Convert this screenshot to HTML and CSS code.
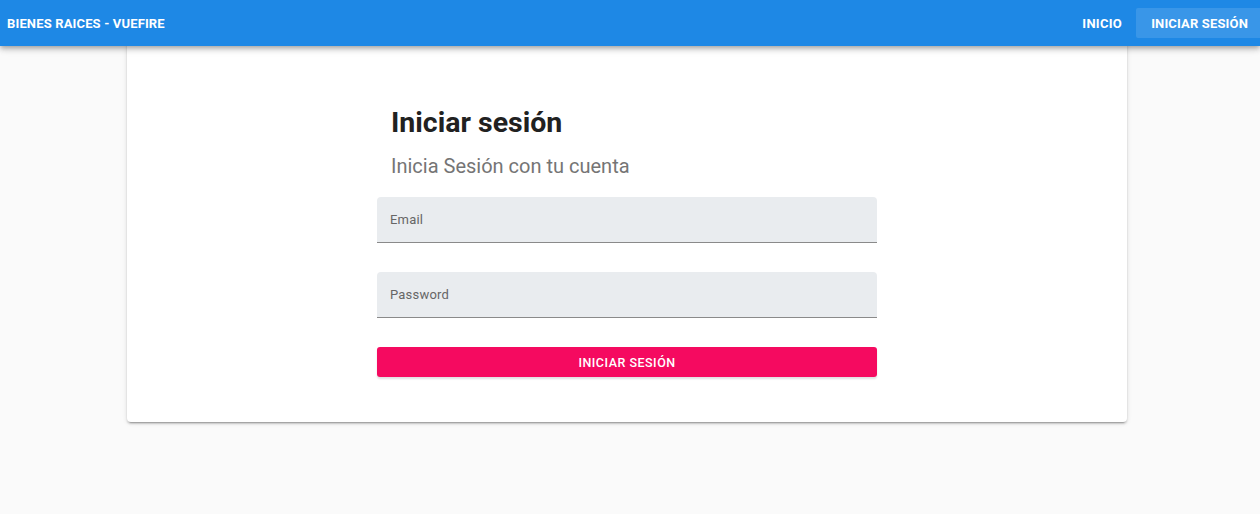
FILE: index.html
```html
<!DOCTYPE html>
<html lang="es">
<head>
<meta charset="utf-8">
<title>Bienes Raices - Vuefire</title>
<link rel="stylesheet" href="styles.css">
</head>
<body>
<header class="appbar">
  <div class="brand">BIENES RAICES - VUEFIRE</div>
  <nav class="nav">
    <a class="nav-btn">INICIO</a>
    <a class="nav-btn active">INICIAR SESIÓN</a>
  </nav>
</header>
<main class="main">
  <section class="card">
    <div class="form-wrap">
      <h1 class="title">Iniciar sesión</h1>
      <p class="subtitle">Inicia Sesión con tu cuenta</p>
      <div class="field"><span class="label">Email</span></div>
      <div class="field"><span class="label">Password</span></div>
      <button class="submit">INICIAR SESIÓN</button>
    </div>
  </section>
</main>
</body>
</html>
```
FILE: styles.css
```css
* { box-sizing: border-box; }
html, body { margin: 0; padding: 0; }
body {
  background: #fafafa;
  font-family: Roboto, "Liberation Sans", sans-serif;
  height: 514px;
  overflow: hidden;
}
.appbar {
  position: relative;
  z-index: 2;
  height: 46px;
  background: #1e88e5;
  display: flex;
  align-items: center;
  justify-content: space-between;
  box-shadow: 0 2px 4px -1px rgba(0,0,0,.2), 0 4px 5px 0 rgba(0,0,0,.14), 0 1px 10px 0 rgba(0,0,0,.12);
}
.brand {
  color: #fff;
  font-weight: 700;
  font-size: 13px;
  padding-left: 7px;
  letter-spacing: 0.15px;
}
.nav { display: flex; align-items: center; height: 100%; }
.nav-btn {
  color: #fff;
  font-weight: 700;
  font-size: 13px;
  letter-spacing: 0.3px;
  height: 30px;
  display: flex;
  align-items: center;
  padding: 0 14px;
}
.nav-btn.active {
  background: rgba(255,255,255,0.12);
  padding: 0 12px 0 15px;
  letter-spacing: 0.15px;
  border-radius: 2px 0 0 2px;
}
.main { display: flex; justify-content: center; padding-right: 6px; }
.card {
  width: 1000px;
  background: #fff;
  border-radius: 0 0 4px 4px;
  margin-top: -4px;
  padding: 63px 0 45px;
  box-shadow: 0 3px 1px -2px rgba(0,0,0,.2), 0 2px 2px 0 rgba(0,0,0,.14), 0 1px 5px 0 rgba(0,0,0,.12);
}
.form-wrap {
  width: 500px;
  margin: 0 auto;
}
.title {
  margin: 0;
  padding-left: 14px;
  font-size: 28.5px;
  font-weight: 700;
  color: #212121;
  line-height: 36px;
}
.subtitle {
  margin: 11px 0 0;
  padding-left: 14px;
  font-size: 20px;
  color: #757575;
  line-height: 28px;
}
.field {
  margin-top: 17px;
  height: 46px;
  background: #e9ecef;
  border-radius: 4px 4px 0 0;
  border-bottom: 1px solid #8a8a8a;
  display: flex;
  align-items: center;
  padding-left: 13px;
}
.field + .field { margin-top: 29px; }
.label {
  font-size: 13px;
  color: #666;
  letter-spacing: 0.2px;
}
.submit {
  margin-top: 29px;
  width: 100%;
  height: 30px;
  border: none;
  border-radius: 3px;
  background: #f50a60;
  color: #fff;
  font-family: Roboto, "Liberation Sans", sans-serif;
  font-size: 12.5px;
  font-weight: 500;
  letter-spacing: 0.5px;
  box-shadow: 0 2px 2px rgba(0,0,0,.12);
}
```
